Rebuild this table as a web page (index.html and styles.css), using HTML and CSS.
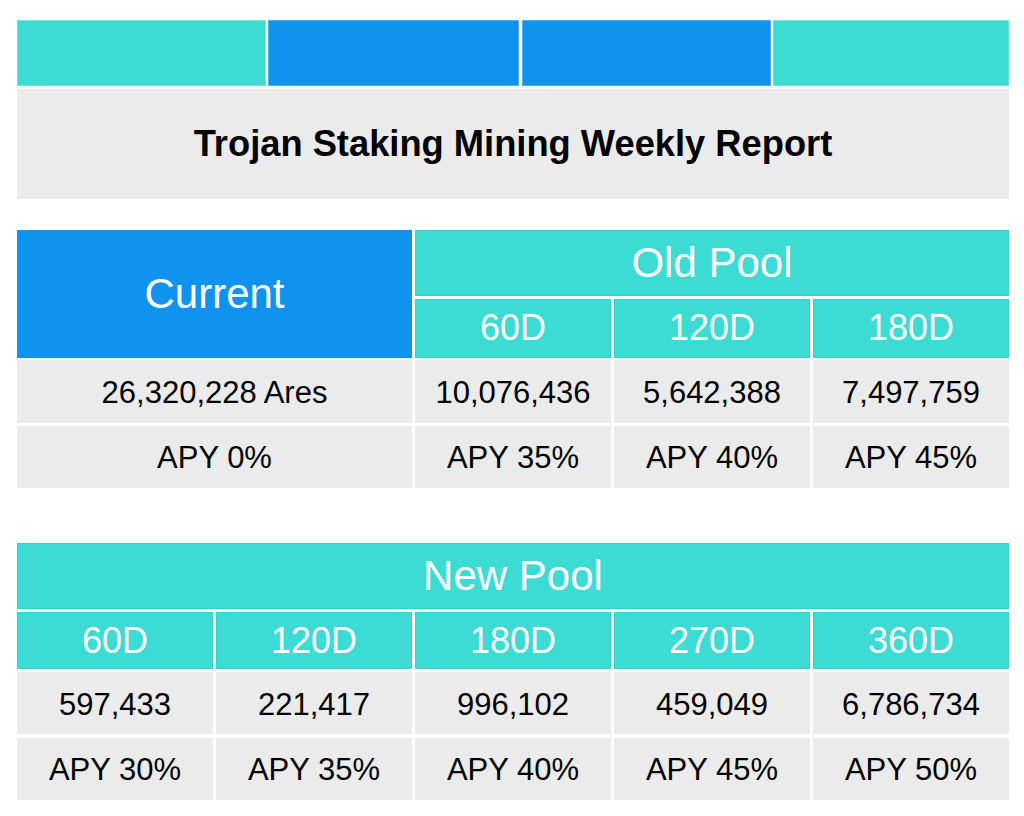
FILE: index.html
```html
<!DOCTYPE html>
<html>
<head>
<meta charset="utf-8">
<link rel="stylesheet" href="styles.css">
</head>
<body>
<div class="page">
  <div class="topbar">
    <div class="seg teal"></div>
    <div class="seg blue"></div>
    <div class="seg blue"></div>
    <div class="seg teal"></div>
  </div>
  <div class="title">Trojan Staking Mining Weekly Report</div>

  <div class="grid old">
    <div class="cell blue big current">Current</div>
    <div class="cell teal big oldpool">Old Pool</div>
    <div class="cell teal sub">60D</div>
    <div class="cell teal sub">120D</div>
    <div class="cell teal sub">180D</div>
    <div class="cell data span2">26,320,228 Ares</div>
    <div class="cell data">10,076,436</div>
    <div class="cell data">5,642,388</div>
    <div class="cell data">7,497,759</div>
    <div class="cell data span2">APY 0%</div>
    <div class="cell data">APY 35%</div>
    <div class="cell data">APY 40%</div>
    <div class="cell data">APY 45%</div>
  </div>

  <div class="grid new">
    <div class="cell teal big span5">New Pool</div>
    <div class="cell teal sub">60D</div>
    <div class="cell teal sub">120D</div>
    <div class="cell teal sub">180D</div>
    <div class="cell teal sub">270D</div>
    <div class="cell teal sub">360D</div>
    <div class="cell data">597,433</div>
    <div class="cell data">221,417</div>
    <div class="cell data">996,102</div>
    <div class="cell data">459,049</div>
    <div class="cell data">6,786,734</div>
    <div class="cell data">APY 30%</div>
    <div class="cell data">APY 35%</div>
    <div class="cell data">APY 40%</div>
    <div class="cell data">APY 45%</div>
    <div class="cell data">APY 50%</div>
  </div>
</div>
</body>
</html>
```
FILE: styles.css
```css
html, body {
  margin: 0;
  padding: 0;
  background: #ffffff;
}
body {
  font-family: "Liberation Sans", Arial, Helvetica, sans-serif;
}
.page {
  width: 992px;
  padding: 20px 0 0 17px;
}
.topbar {
  display: grid;
  grid-template-columns: 249px 251px 249px 1fr;
  column-gap: 2.35px;
  height: 66px;
}
.seg {
  box-shadow: inset 0 0 0 1px rgba(255, 255, 255, 0.25);
}
.teal { background: #3cdbd3; }
.blue { background: #1093ee; }
.title {
  margin-top: 3px;
  height: 110px;
  background: #ebebeb;
  display: flex;
  align-items: center;
  justify-content: center;
  font-weight: bold;
  font-size: 36.3px;
  color: #000;
}
.grid {
  display: grid;
  grid-template-columns: repeat(5, 1fr);
  column-gap: 3px;
}
.old {
  margin-top: 31px;
  grid-template-rows: 66px 59px 63px 62px;
  row-gap: 2.5px;
}
.new {
  margin-top: 55.5px;
  grid-template-rows: 66px 57px 62px 62px;
  row-gap: 3.2px;
}
.cell {
  display: flex;
  align-items: center;
  justify-content: center;
}
.cell.teal {
  box-shadow: inset 0 0 0 1px #34d2ca;
}
.big {
  color: #fff;
  font-size: 42px;
}
.sub {
  color: #fff;
  font-size: 36px;
}
.data {
  background: #ebebeb;
  color: #000;
  font-size: 31px;
  padding-top: 3px;
  box-sizing: border-box;
}
.current {
  grid-column: 1 / span 2;
  grid-row: 1 / span 2;
}
.oldpool {
  grid-column: 3 / span 3;
}
.span2 {
  grid-column: span 2;
}
.span5 {
  grid-column: 1 / span 5;
}
```
